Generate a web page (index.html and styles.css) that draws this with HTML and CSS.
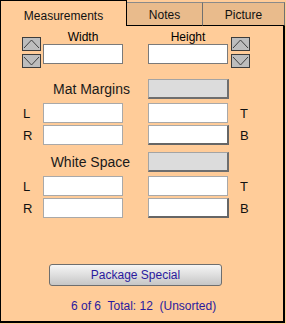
FILE: index.html
```html
<!DOCTYPE html>
<html lang="en">
<head>
    <meta charset="UTF-8">
    <title>Measurements</title>
    <link rel="stylesheet" href="styles.css">
</head>
<body>
    <div class="tabs">
        <div class="tab active">Measurements</div>
        <div class="tab notes">Notes</div>
        <div class="tab picture">Picture</div>
    </div>
    <div class="panel">
        <div class="size-row">
            <div class="spin spin-left">
                <div class="spin-btn"><svg width="17" height="12"><polyline points="1,10 8.5,2 16,10" /></svg></div>
                <div class="spin-btn"><svg width="17" height="12"><polyline points="1,2 8.5,10 16,2" /></svg></div>
            </div>
            <div class="field field-left">
                <label>Width</label>
                <input type="text" class="size-input">
            </div>
            <div class="field field-right">
                <label>Height</label>
                <input type="text" class="size-input">
            </div>
            <div class="spin spin-right">
                <div class="spin-btn"><svg width="17" height="12"><polyline points="1,10 8.5,2 16,10" /></svg></div>
                <div class="spin-btn"><svg width="17" height="12"><polyline points="1,2 8.5,10 16,2" /></svg></div>
            </div>
        </div>

        <div class="group">
            <div class="group-head">
                <span class="group-title">Mat Margins</span>
                <div class="grey-btn"></div>
            </div>
            <div class="pair-row">
                <span class="side-left">L</span>
                <input type="text" class="plain-input col-left">
                <input type="text" class="plain-input col-right">
                <span class="side-right">T</span>
            </div>
            <div class="pair-row">
                <span class="side-left">R</span>
                <input type="text" class="plain-input col-left">
                <input type="text" class="plain-input col-right raised">
                <span class="side-right">B</span>
            </div>
        </div>

        <div class="group">
            <div class="group-head">
                <span class="group-title">White Space</span>
                <div class="grey-btn"></div>
            </div>
            <div class="pair-row">
                <span class="side-left">L</span>
                <input type="text" class="plain-input col-left">
                <input type="text" class="plain-input col-right">
                <span class="side-right">T</span>
            </div>
            <div class="pair-row">
                <span class="side-left">R</span>
                <input type="text" class="plain-input col-left">
                <input type="text" class="plain-input col-right raised">
                <span class="side-right">B</span>
            </div>
        </div>

        <button type="button" class="package-btn">Package Special</button>
        <div class="status">6 of 6&nbsp; Total: 12&nbsp; (Unsorted)</div>
    </div>
</body>
</html>
```

FILE: styles.css
```css
/* General */
body {
    margin: 0;
    background-color: #ffcc99;
    font-family: 'Liberation Sans', Arial, sans-serif;
    font-size: 12px;
    color: #111;
}

/* Tabs */
.tabs {
    display: flex;
    align-items: flex-end;
    width: 285px;
    height: 26px;
}
.tab {
    box-sizing: border-box;
    text-align: center;
    line-height: 15px;
}
.tab.active {
    width: 127px;
    height: 26px;
    padding-top: 8px;
    border: 1px solid #000;
    border-bottom: none;
    background-color: #ffcc99;
}
.tab.notes,
.tab.picture {
    height: 24px;
    padding-top: 5px;
    background-color: #e9bb8c;
    border-top: 1px solid #8a8a8a;
    border-bottom: 1px solid #000;
    border-right: 1px solid #707070;
}
.tab.notes {
    width: 76px;
}
.tab.picture {
    width: 82px;
}

/* Panel */
.panel {
    box-sizing: border-box;
    width: 285px;
    height: 297px;
    border-left: 1px solid #000;
    border-right: 2px solid #000;
    border-bottom: 2px solid #000;
}

/* Width / Height row */
.size-row {
    display: grid;
    grid-template-columns: 19px 2px 80px 25px 80px 3px 19px;
    align-items: start;
    padding: 4px 0 0 21px;
}
.spin-left {
    grid-column: 1;
}
.field-left {
    grid-column: 3;
}
.field-right {
    grid-column: 5;
}
.spin-right {
    grid-column: 7;
}
.spin {
    display: flex;
    flex-direction: column;
    gap: 3px;
    margin-top: 7px;
}
.spin-btn {
    box-sizing: border-box;
    width: 19px;
    height: 14px;
    border: 1px solid #3c3c3c;
    background-color: #bdbdbd;
}
.spin-btn svg {
    display: block;
}
.spin-btn polyline {
    fill: none;
    stroke: #404040;
    stroke-width: 1;
}
.field {
    display: flex;
    flex-direction: column;
    align-items: center;
}
.field label {
    line-height: 14px;
    color: #000;
}
.size-input {
    box-sizing: border-box;
    width: 80px;
    height: 20px;
    margin: 0;
    border: 1px solid #7a7a7a;
    background: #fff;
}

/* Margin groups */
.group {
    margin-top: 11px;
}
.group + .group {
    margin-top: 7px;
}
.group-head,
.pair-row {
    display: grid;
    grid-template-columns: 42px 80px 25px 80px 1fr;
    align-items: center;
}
.group-head {
    margin-bottom: 4px;
}
.group-title {
    grid-column: 2 / 4;
    text-align: right;
    padding-right: 18px;
    font-size: 14px;
    line-height: 20px;
    color: #1a1a1a;
}
.grey-btn {
    grid-column: 4 / 6;
    box-sizing: border-box;
    width: 81px;
    height: 20px;
    background-color: #dcdcdc;
    border: 1px solid #a4a4a4;
    border-right: 2px solid #6e6e6e;
    border-bottom: 2px solid #6e6e6e;
}
.pair-row {
    margin-bottom: 2px;
}
.side-left {
    grid-column: 1;
    padding-left: 22px;
    font-size: 13px;
}
.side-right {
    grid-column: 5;
    padding-left: 12px;
    font-size: 13px;
}
.col-left {
    grid-column: 2;
}
.col-right {
    grid-column: 4;
}
.plain-input {
    box-sizing: border-box;
    width: 80px;
    height: 20px;
    margin: 0;
    border: 1px solid #a9a9a9;
    background: #fff;
}
.plain-input.raised {
    width: 81px;
    border-right: 2px solid #666;
    border-bottom: 2px solid #666;
}

/* Bottom */
.package-btn {
    display: block;
    box-sizing: border-box;
    width: 173px;
    height: 22px;
    margin: 46px 0 0 48px;
    padding: 0;
    border: 1px solid #6e6e6e;
    border-radius: 3px;
    background: linear-gradient(#f6f6f6, #c6c6c6);
    font-family: 'Liberation Sans', Arial, sans-serif;
    font-size: 12px;
    color: #2a1a9e;
}
.status {
    margin-top: 13px;
    padding-left: 70px;
    line-height: 14px;
    color: #2a1a9e;
}
```
